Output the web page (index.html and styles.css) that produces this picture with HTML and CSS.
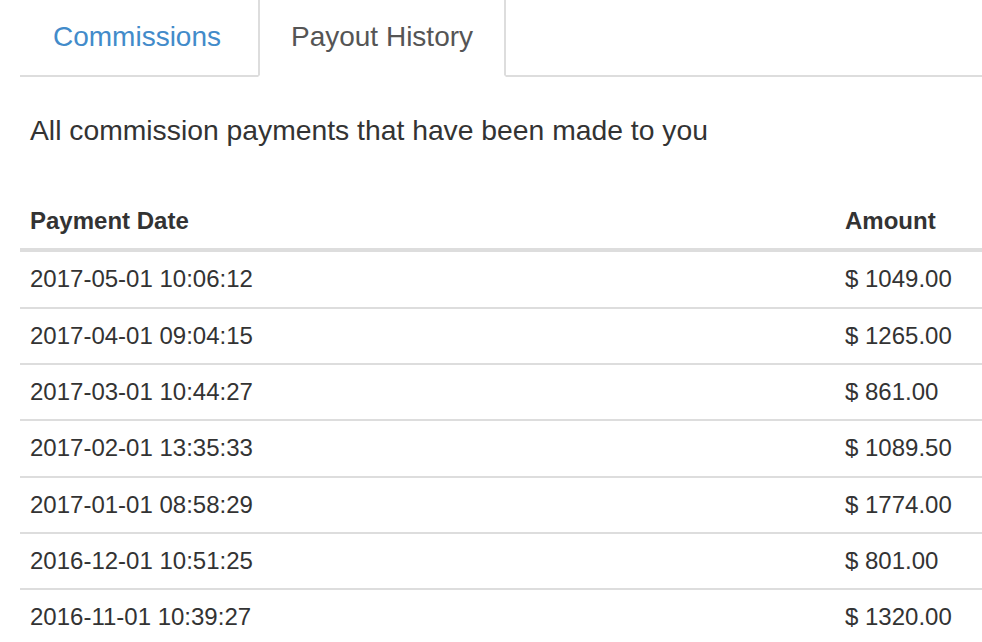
FILE: index.html
```html
<!DOCTYPE html>
<html>
<head>
<meta charset="utf-8">
<link rel="stylesheet" href="styles.css">
</head>
<body>
<div class="page">
  <ul class="tabs">
    <li class="tab"><a class="tab-link" href="#">Commissions</a></li>
    <li class="tab active"><a class="tab-link" href="#">Payout History</a></li>
  </ul>
  <div class="tab-content">
    <p class="lead">All commission payments that have been made to you</p>
    <table class="payouts">
      <thead>
        <tr><th class="col-date">Payment Date</th><th class="col-amount">Amount</th></tr>
      </thead>
      <tbody>
        <tr><td>2017-05-01 10:06:12</td><td>$ 1049.00</td></tr>
        <tr><td>2017-04-01 09:04:15</td><td>$ 1265.00</td></tr>
        <tr><td>2017-03-01 10:44:27</td><td>$ 861.00</td></tr>
        <tr><td>2017-02-01 13:35:33</td><td>$ 1089.50</td></tr>
        <tr><td>2017-01-01 08:58:29</td><td>$ 1774.00</td></tr>
        <tr><td>2016-12-01 10:51:25</td><td>$ 801.00</td></tr>
        <tr><td>2016-11-01 10:39:27</td><td>$ 1320.00</td></tr>
      </tbody>
    </table>
  </div>
</div>
</body>
</html>
```

FILE: styles.css
```css
html, body {
  margin: 0;
  padding: 0;
  background: #fff;
}
body {
  font-family: "Liberation Sans", Arial, Helvetica, sans-serif;
  color: #333;
  overflow: hidden;
}
.page {
  padding-left: 20px;
}
.tabs {
  list-style: none;
  margin: -4px 0 0 0;
  padding: 0;
  display: flex;
  border-bottom: 2px solid #ddd;
}
.tab {
  margin-bottom: -2px;
}
.tab:first-child {
  width: 238px;
}
.tab.active {
  width: 248px;
}
.tab-link {
  display: block;
  box-sizing: border-box;
  height: 81px;
  line-height: 77px;
  border: 2px solid transparent;
  text-align: center;
  font-size: 28px;
  color: #428bca;
  text-decoration: none;
}
.tab:first-child .tab-link {
  padding-right: 4px;
}
.tab.active .tab-link {
  color: #555;
  border-color: #ddd;
  border-bottom-color: #fff;
  background: #fff;
}
.tab-content {
  padding-top: 33px;
}
.lead {
  margin: 0 0 44px 0;
  padding-left: 10px;
  font-size: 28.3px;
  line-height: 40px;
}
.payouts {
  width: 962px;
  border-collapse: collapse;
  font-size: 24px;
}
.payouts th,
.payouts td {
  padding: 10px;
  line-height: 34.33px;
  text-align: left;
}
.payouts th {
  font-weight: bold;
  border-bottom: 4px solid #ddd;
}
.payouts td {
  border-bottom: 2px solid #ddd;
}
.col-amount {
  width: 127px;
}
```
